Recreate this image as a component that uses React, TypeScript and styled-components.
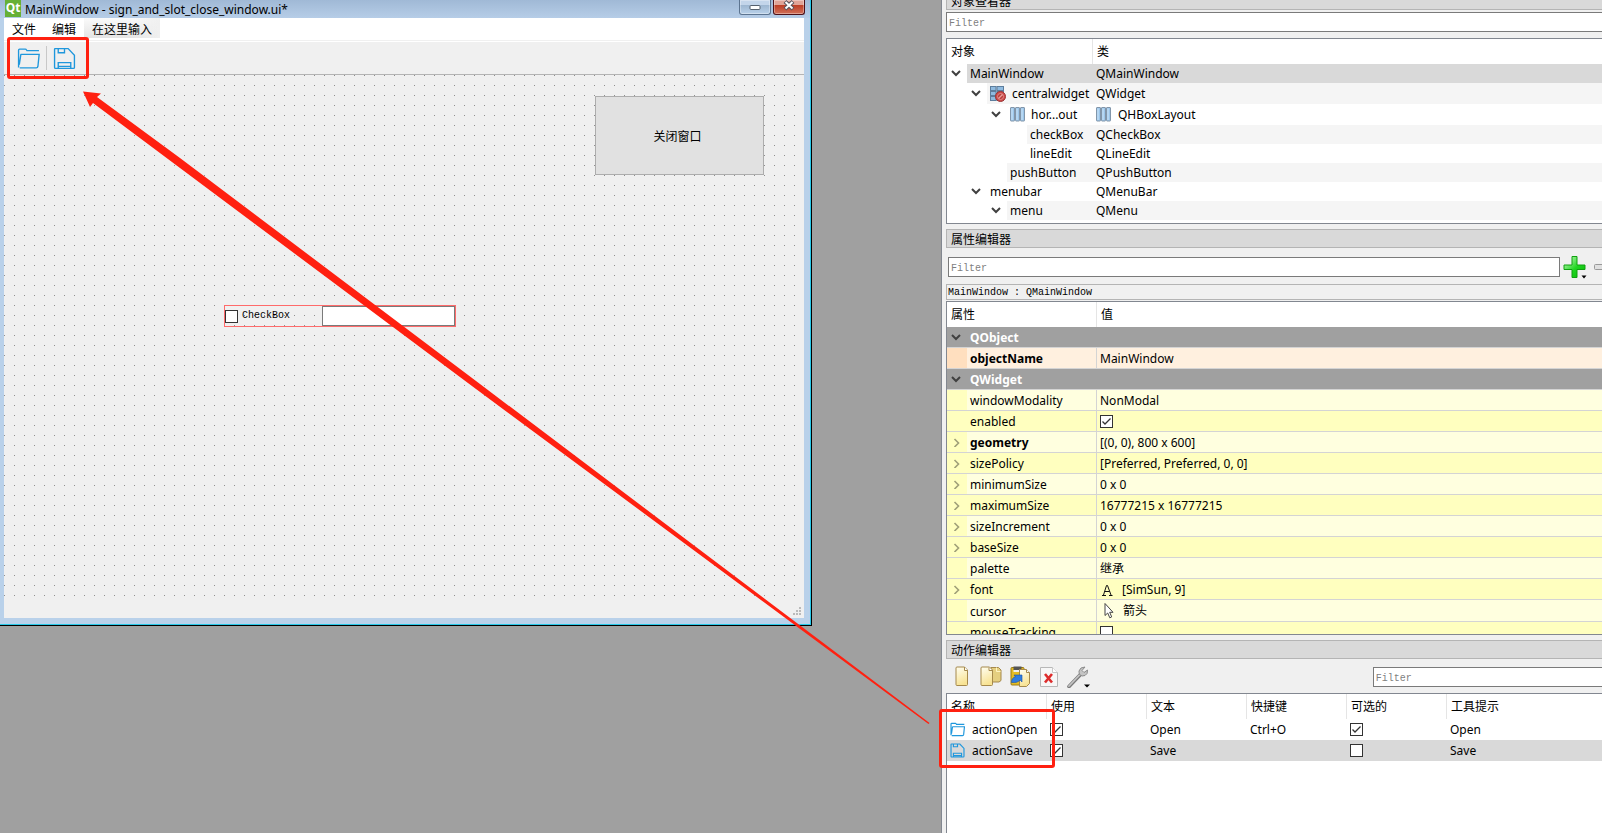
import React from "react";
import styled, { createGlobalStyle, css } from "styled-components";

const ui = `"Noto Sans", "Noto Sans CJK SC", sans-serif`;
const mono = `"Liberation Mono", "Noto Sans CJK SC", monospace`;
const red = "#ff2010";

const GlobalStyle = createGlobalStyle`
  * { box-sizing: border-box; }
  body { margin: 0; background: #a0a0a0; color: #000; font: 12px/16px ${ui}; }
  button, input { font: inherit; color: inherit; margin: 0; }
`;

const Page = styled.main`
  position: relative;
  display: grid;
  grid-template-columns: minmax(0, 942fr) minmax(0, 660fr);
  min-height: 100vh;
  overflow: hidden;
`;

const Workspace = styled.section`
  min-width: 0;
  background: #a0a0a0;
  border-right: 1px solid #828790;
`;

/* ---------- designed form window ---------- */

const FormWindow = styled.div`
  position: relative;
  width: 812px;
  background: #b9d1ea;
  border: solid #000;
  border-width: 0 1px 1px 0;
  box-shadow: inset -1px -1px 0 #28c8e8;
  padding-bottom: 7px;
`;

const TitleBar = styled.header`
  display: flex;
  align-items: flex-start;
  height: 18px;
  margin-right: 1px;
  padding: 0 5px;
  gap: 2px;
  background: linear-gradient(#a0b9d6, #b6cde7);
`;

const QtBadge = styled.span`
  width: 16px;
  height: 17px;
  margin-right: 2px;
  background: #66b036;
  color: #fff;
  font-weight: 700;
  line-height: 16px;
  text-align: center;
`;

const WindowTitle = styled.h1`
  flex: 1;
  margin: 0;
  font-size: 12px;
  font-weight: 400;
  line-height: 19px;
  white-space: nowrap;
`;

const CaptionButton = styled.button<{ $danger?: boolean }>`
  display: flex;
  justify-content: center;
  width: 32px;
  height: 15px;
  padding: 0;
  border: 1px solid ${(p) => (p.$danger ? "#4c1018" : "#5c7490")};
  border-top: 0;
  border-radius: 0 0 3px 3px;
  background: ${(p) =>
    p.$danger
      ? "linear-gradient(#e0a498 0 35%, #bd3d24 36%, #d0705a)"
      : "linear-gradient(#c3d5ea 0 35%, #9db6d0 36%, #b9d1ea)"};
  box-shadow: inset 0 0 0 1px rgba(255, 255, 255, 0.35);
`;

const FormBody = styled.div`
  width: 800px;
  margin-left: 4px;
  background: #f0f0f0;
`;

const MenuBar = styled.nav`
  display: flex;
  height: 24px;
  padding-bottom: 2px;
  background: linear-gradient(#fff 22px, #f0f0f0 22px 23px, #fff 23px);
`;

const MenuItem = styled.button<{ $placeholder?: boolean }>`
  height: 20px;
  padding: 0 8px;
  border: 0;
  line-height: 23px;
  background: ${(p) => (p.$placeholder ? "linear-gradient(90deg, #fff0, #fff0 60%, #f0f0f0), linear-gradient(#fafafa, #e4e4e4)" : "none")};
`;

const FormToolBar = styled.div`
  position: relative;
  z-index: 1;
  display: flex;
  align-items: center;
  height: 33px;
  padding-left: 13px;
  gap: 6px;
  border-bottom: 1px solid #b4b4b4;
`;

const ToolSeparator = styled.span`
  width: 1px;
  height: 24px;
  background: #c8c8c8;
`;

const PlainButton = styled.button`
  display: grid;
  place-items: center;
  padding: 0;
  border: 0;
  background: none;
`;

const DesignSurface = styled.div`
  position: relative;
  height: 521px;
  background: linear-gradient(90deg, #0000 1px, #f0f0f0 1px) 0 0 / 10px 10px,
    linear-gradient(#909090 1px, #f0f0f0 1px) 0 0 / 10px 10px;
`;

const CloseFormButton = styled.button`
  position: absolute;
  left: 591px;
  top: 21px;
  width: 169px;
  height: 79px;
  padding: 2px 4px 0 0;
  border: 1px solid #adadad;
  background: #e1e1e1;
`;

const BoxLayout = styled.div`
  position: absolute;
  left: 220px;
  top: 230px;
  display: flex;
  align-items: center;
  width: 232px;
  height: 22px;
  border: 1px solid #ff6b6b;
  font-family: ${mono};
  font-size: 10px;
`;

const FormCheck = styled.label`
  display: flex;
  flex: 1;
  align-items: center;
  gap: 4px;
  line-height: 12px;
`;

const FormLineEdit = styled.input`
  width: 133px;
  height: 20px;
  border: 1px solid #7a7a7a;
  background: #fff;
`;

const StatusBar = styled.footer`
  display: flex;
  justify-content: flex-end;
  align-items: flex-end;
  height: 22px;
  padding: 2px;
`;

/* ---------- shared controls ---------- */

const Tick = styled.input.attrs({ type: "checkbox" })`
  appearance: none;
  display: block;
  flex: none;
  width: 13px;
  height: 13px;
  border: 1px solid #333;
  background: #fff;
  &:checked {
    background: #fff
      url("data:image/svg+xml,%3Csvg xmlns='http://www.w3.org/2000/svg' viewBox='0 0 11 11'%3E%3Cpath d='M1.5 5.5 4 8 9.5 2.5' fill='none' stroke='%23333' stroke-width='1.3'/%3E%3C/svg%3E");
  }
`;

const Filter = styled.input.attrs({ type: "text", placeholder: "Filter" })<{ $open?: boolean }>`
  flex: 1;
  min-width: 0;
  height: 20px;
  padding: 2px 2px 0;
  border: 1px solid #7a7a7a;
  ${(p) => p.$open && "border-right: 0;"}
  background: #fff;
  font-family: ${mono};
  font-size: 10px;
  &::placeholder {
    color: #7f7f7f;
    opacity: 1;
  }
`;

/* ---------- dock area ---------- */

const Dock = styled.aside`
  display: flex;
  flex-direction: column;
  min-width: 0;
  padding-left: 4px;
  background: #f0f0f0;
`;

const DockPanel = styled.section<{ $grow?: boolean }>`
  display: flex;
  flex-direction: column;
  flex: ${(p) => (p.$grow ? "1" : "none")};
  margin-bottom: ${(p) => (p.$grow ? "0" : "5px")};
`;

const DockTitle = styled.h2<{ $cut?: boolean }>`
  display: flex;
  align-items: flex-end;
  height: ${(p) => (p.$cut ? "10px" : "19px")};
  margin: 0;
  padding-left: 4px;
  border: 1px solid #b4b4b4;
  border-right: 0;
  border-top-width: ${(p) => (p.$cut ? "0" : "1px")};
  background: #d9d9d9;
  font-size: 12px;
  font-weight: 400;
  line-height: ${(p) => (p.$cut ? "14px" : "15px")};
  overflow: hidden;
`;

const FilterRow = styled.div<{ $variant: "tree" | "property" | "action" }>`
  display: flex;
  align-items: center;
  height: 20px;
  ${(p) =>
    p.$variant === "tree"
      ? css`
          margin: 2px 0 6px;
        `
      : p.$variant === "property"
      ? css`
          margin: 9px 0 7px 2px;
        `
      : css`
          margin: 8px 0 6px 1px;
        `}
`;

const ActionFilterSlot = styled.div`
  display: flex;
  width: 35%;
  margin-left: auto;
`;

const PropertyTools = styled.div`
  display: flex;
  flex: none;
  width: 42px;
  gap: 7px;
  padding-left: 3px;
  overflow: hidden;
`;

const ObjectLabel = styled.div`
  height: 16px;
  margin-bottom: 1px;
  padding-left: 1px;
  border: 1px solid #b4b4b4;
  border-right: 0;
  font-family: ${mono};
  font-size: 10px;
  line-height: 16px;
`;

const View = styled.div<{ $height?: number }>`
  flex: ${(p) => (p.$height ? "none" : "1")};
  height: ${(p) => (p.$height ? `${p.$height}px` : "auto")};
  border: 1px solid #828790;
  border-right: 0;
  ${(p) => !p.$height && "border-bottom: 0;"}
  background: #fff;
  overflow: hidden;
`;

const Table = styled.table`
  width: 100%;
  border-collapse: separate;
  border-spacing: 0;
  table-layout: fixed;
  td, th {
    padding: 0;
    text-align: left;
    white-space: nowrap;
  }
`;

const Col = styled.col<{ $w?: number }>`
  width: ${(p) => (p.$w ? `${p.$w}px` : "auto")};
`;

const Head = styled.th`
  && {
    height: 25px;
    padding: 1px 0 0 4px;
    font-weight: 400;
  }
  & + & {
    border-left: 1px solid #e5e5e5;
  }
`;

type Shade = "none" | "alt" | "selected";
const shades: Record<Shade, string> = { none: "#fff", alt: "#f5f5f5", selected: "#d9d9d9" };

const TreeRow = styled.tr<{ $tall?: boolean }>`
  height: ${(p) => (p.$tall ? 21 : 19)}px;
`;

const Branch = styled.div<{ $depth: number }>`
  display: flex;
  height: 100%;
  padding-left: ${(p) => p.$depth * 20}px;
`;

const Expander = styled.span`
  display: grid;
  place-items: center;
  flex: none;
  width: 20px;
  padding: 0 2px 2px 0;
`;

const Name = styled.span<{ $shade: Shade; $tall?: boolean }>`
  display: flex;
  flex: 1;
  align-items: center;
  gap: 6px;
  min-width: 0;
  height: ${(p) => (p.$tall ? 21 : 19)}px;
  padding-left: 3px;
  background: ${(p) => shades[p.$shade]};
`;

const ClassCell = styled.td<{ $shade: Shade }>`
  background: ${(p) => shades[p.$shade]};
`;

const Inline = styled.span<{ $pad: number }>`
  display: flex;
  align-items: center;
  gap: 7px;
  padding-left: ${(p) => p.$pad}px;
`;

type Tone = "group" | "peach" | "light" | "deep";
const tones: Record<Tone, [string, string]> = {
  group: ["#a0a0a0", "#a0a0a0"],
  peach: ["#ffdfbf", "#fff0df"],
  light: ["#ffffbf", "#ffffdf"],
  deep: ["#ffffbf", "#ffffbf"],
};

const PropRow = styled.tr<{ $tone: Tone; $bold?: boolean; $tall?: boolean }>`
  background: ${(p) => tones[p.$tone][1]};
  color: ${(p) => (p.$tone === "group" ? "#fff" : "#000")};
  font-weight: ${(p) => (p.$bold || p.$tone === "group" ? 700 : 400)};
  line-height: 18px;
  td {
    height: ${(p) => (p.$tall ? 22 : 21)}px;
    border-bottom: 1px solid #d4d4d4;
  }
  td + td {
    padding-top: 1px;
    border-left: 1px solid #d4d4d4;
    font-weight: 400;
  }
`;

const PropName = styled.div<{ $tone: Tone; $tall?: boolean }>`
  display: flex;
  height: ${(p) => (p.$tall ? 21 : 20)}px;
  gap: 3px;
  padding-top: 2px;
  align-items: center;
  background: linear-gradient(90deg, ${(p) => tones[p.$tone][0]} 20px, #0000 20px);
`;

const ActionRow = styled.tr<{ $selected?: boolean }>`
  height: 21px;
  background: ${(p) => (p.$selected ? "#d9d9d9" : "#fff")};
`;

const ActionTools = styled.div`
  display: flex;
`;

const ToolButton = styled(PlainButton)`
  width: 29px;
  height: 22px;
`;

/* ---------- annotations ---------- */

const Highlight = styled.div<{ $x: number; $y: number; $w: number; $h: number }>`
  position: absolute;
  left: ${(p) => p.$x}px;
  top: ${(p) => p.$y}px;
  width: ${(p) => p.$w}px;
  height: ${(p) => p.$h}px;
  border: 3px solid ${red};
  border-radius: 3px;
  pointer-events: none;
`;

const Arrow = styled.svg`
  position: absolute;
  z-index: 2;
  left: 0;
  top: 0;
  pointer-events: none;
`;

const ActionArea = styled.div`
  position: relative;
  display: flex;
  flex: 1;
`;

/* ---------- icons ---------- */

const FolderIcon = ({ size = 22 }: { size?: number }) => (
  <svg width={size} height={size} viewBox="0 0 22 22" fill="none" stroke="#1f97dc" strokeWidth={size > 16 ? 1.3 : 1.7}>
    <path d="M1.5 19.5V3q0-1 1-1H8q.7 0 1 .6l.5.9H21M3.5 7H21.2L20 18.6Q19.8 20 18.4 20H2.6M3.7 7 2.2 17" />
  </svg>
);

const SaveIcon = ({ size = 22 }: { size?: number }) => (
  <svg width={size} height={size} viewBox="0 0 22 22" fill="none" stroke="#1f97dc" strokeWidth={size > 16 ? 1.3 : 1.7}>
    <path d="M2 1.5H14.5L20.5 8V19.5q0 1-1 1H2.500q-1 0-1-1V2q0-.5.5-.5ZM5 1.5V5.500h6V1.500M5 20.500V15h12v5.500M5 18.500H17" />
  </svg>
);

const Chevron = ({ open, dim }: { open?: boolean; dim?: boolean }) => (
  <svg width="10" height="10" viewBox="0 0 10 10" fill="none" stroke={dim ? "#a0a078" : "#404040"} strokeWidth={dim ? 1.6 : 2}>
    <path d={open ? "M1 3 5 7 9 3" : "M3.500 2 7.500 6 3.500 10"} />
  </svg>
);

const LayoutIcon = () => (
  <svg width="15" height="15" viewBox="0 0 15 15">
    {[0.5, 5.5, 10.5].map((x) => (
      <g key={x}>
        <rect x={x} y="0.5" width="4" height="13.500" rx="0.500" fill="#9cc6ea" stroke="#8296aa" />
        <path d={`M${x + 1.5} 1.500V13`} stroke="#cfe7fa" />
      </g>
    ))}
  </svg>
);

const BrokenLayoutIcon = () => (
  <svg width="16" height="16" viewBox="0 0 16 16">
    {[0.5, 5.5, 10.5].map((y) => (
      <g key={y} fill="#8fbbe0" stroke="#5d7d9c">
        <rect x="0.5" y={y} width="5.500" height="4" />
        <rect x="7" y={y} width="6.500" height="4" />
      </g>
    ))}
    <circle cx="10.500" cy="10.500" r="5" fill="#cf4a48" stroke="#9c3434" />
    <circle cx="10.500" cy="10.500" r="3" fill="#b93c3a" stroke="#e08a86" />
    <path d="M8.500 12.500 12.500 8.500" stroke="#e9a09c" strokeWidth="1.300" />
  </svg>
);

const PlusIcon = () => (
  <svg width="24" height="24" viewBox="0 0 24 24">
    <defs>
      <linearGradient id="plus" x1="0" y1="0" x2="1" y2="1">
        <stop offset="0" stopColor="#d8ffd0" />
        <stop offset="0.550" stopColor="#1fd51f" />
        <stop offset="1" stopColor="#08b808" />
      </linearGradient>
    </defs>
    <path d="M9 1.500h5v8.500h8v4.500h-8v8h-5v-8h-8v-4.500h8Z" fill="url(#plus)" stroke="#10a010" strokeLinejoin="round" />
    <path d="M18.500 20.500h5l-2.500 3Z" fill="#000" />
  </svg>
);

const MinusIcon = () => (
  <svg width="20" height="24" viewBox="0 0 20 24">
    <rect x="0.5" y="9.500" width="19" height="5" rx="1" fill="#e0e0e0" stroke="#999" />
  </svg>
);

const PageShape = ({ x, y = 1 }: { x: number; y?: number }) => (
  <path
    d={`M${x + 1} ${y}h7.500l3 3v14.500q0 1-1 1h-9.500q-1 0-1-1v-16.500q0-1 1-1Z`}
    fill="url(#paper)"
    stroke="#a5894c"
  />
);

const PaperGradient = () => (
  <linearGradient id="paper" x1="0" y1="0" x2="0.300" y2="1">
    <stop offset="0" stopColor="#fffef2" />
    <stop offset="1" stopColor="#f8e394" />
  </linearGradient>
);

const NewIcon = () => (
  <svg width="22" height="22" viewBox="0 0 22 22">
    <defs>
      <PaperGradient />
    </defs>
    <PageShape x={5} />
    <path d="M13.500 1v3.500H16.500" fill="#fff" stroke="#a5894c" />
  </svg>
);

const CopyIcon = () => (
  <svg width="22" height="22" viewBox="0 0 22 22">
    <path d="M11 1.500h7.500l2.500 2.500v10.500l-2 1.500h-8Z" fill="#e5cf80" stroke="#a5894c" />
    <path d="M16.500 1.500V5.500h4" fill="none" stroke="#fff4c0" />
    <PageShape x={1} />
    <path d="M9 1.500v3h3" fill="#fff" stroke="#a5894c" />
  </svg>
);

const PasteIcon = () => (
  <svg width="22" height="22" viewBox="0 0 22 22">
    <rect x="2" y="1.500" width="13" height="17.500" rx="1" fill="#e5bd22" stroke="#9a7a18" />
    <rect x="4.500" y="0.500" width="8" height="3.500" fill="#555" />
    <rect x="4.500" y="4" width="8" height="2" fill="#eee" />
    <path d="M10.500 3.500h7l3 3v11l-3 3H10.500Z" fill="url(#paper)" stroke="#a5894c" />
    <path d="M17.500 3.500v3h3" fill="#fff" stroke="#a5894c" />
    <path d="M2.500 16.500q0-5 4-5.500l-1.500-2h8v7l-2-2q-2 3-8.500 2.500Z" fill="#2f7de0" stroke="#1950a8" strokeWidth="0.600" />
  </svg>
);

const DeleteIcon = () => (
  <svg width="22" height="22" viewBox="0 0 22 22">
    <path d="M2.500 1.500h12l5 5v14h-17Z" fill="#f7f7f7" stroke="#b8b8b8" />
    <path d="M14.500 1.500v5h5" fill="#fff" stroke="#c8c8c8" />
    <path d="M7 8 14 16.500M14 8 7 16.500" stroke="#dd2c2c" strokeWidth="2.600" />
  </svg>
);

const WrenchIcon = () => (
  <svg width="24" height="22" viewBox="0 0 24 22">
    <path d="M3 20.500 14.500 8.500" stroke="#7a7a7a" strokeWidth="3.600" strokeLinecap="round" />
    <path d="M3 20 14.500 8" stroke="#c4c4c4" strokeWidth="1.800" strokeLinecap="round" />
    <path d="M19 1q-5 0-6 4 0 2 .500 3.500Q16 11 19 9.500 22 8 21.500 4l-3.500 2.500-2-2Z" fill="#c4c4c4" stroke="#8c8c8c" />
    <path d="M18 18.500h6l-3 3Z" fill="#000" />
  </svg>
);

const FontIcon = () => (
  <svg width="15" height="14" viewBox="0 0 15 14" fill="none" stroke="#111">
    <path d="M2 12.500H6M9 12.500H12.500M3.500 12 6.500 2.500H7.500L11 12M4.800 8.500H9.500" />
  </svg>
);

const CursorIcon = () => (
  <svg width="16" height="16" viewBox="0 0 16 16">
    <path d="M5 0.500V12.500L7.700 10 9.800 14.800 11.700 13.900 9.700 9.300H13Z" fill="#fff" stroke="#444" />
  </svg>
);

const Grip = () => (
  <svg width="9" height="9" fill="#bababa">
    {[[6, 0], [3, 3], [6, 3], [0, 6], [3, 6], [6, 6]].map(([x, y]) => (
      <rect key={`${x}-${y}`} x={x} y={y} width="2" height="2" />
    ))}
  </svg>
);

/* ---------- data ---------- */

type TreeItem = { name: string; cls: string; depth: number; open?: boolean; shade: Shade; icon?: React.ReactNode; clsIcon?: React.ReactNode };
const objects: TreeItem[] = [
  { name: "MainWindow", cls: "QMainWindow", depth: 0, open: true, shade: "selected" },
  { name: "centralwidget", cls: "QWidget", depth: 1, open: true, shade: "alt", icon: <BrokenLayoutIcon /> },
  { name: "hor...out", cls: "QHBoxLayout", depth: 2, open: true, shade: "none", icon: <LayoutIcon />, clsIcon: <LayoutIcon /> },
  { name: "checkBox", cls: "QCheckBox", depth: 3, shade: "alt" },
  { name: "lineEdit", cls: "QLineEdit", depth: 3, shade: "none" },
  { name: "pushButton", cls: "QPushButton", depth: 2, shade: "alt" },
  { name: "menubar", cls: "QMenuBar", depth: 1, open: true, shade: "none" },
  { name: "menu", cls: "QMenu", depth: 2, open: true, shade: "alt" },
];

type Prop = { name: string; value?: React.ReactNode; tone: Tone; bold?: boolean; nested?: boolean; tall?: boolean; icon?: React.ReactNode };
const properties: Prop[] = [
  { name: "QObject", tone: "group" },
  { name: "objectName", value: "MainWindow", tone: "peach", bold: true },
  { name: "QWidget", tone: "group" },
  { name: "windowModality", value: "NonModal", tone: "light" },
  { name: "enabled", value: <Tick aria-label="enabled" defaultChecked />, tone: "deep" },
  { name: "geometry", value: "[(0, 0), 800 x 600]", tone: "light", bold: true, nested: true },
  { name: "sizePolicy", value: "[Preferred, Preferred, 0, 0]", tone: "deep", nested: true },
  { name: "minimumSize", value: "0 x 0", tone: "light", nested: true },
  { name: "maximumSize", value: "16777215 x 16777215", tone: "deep", nested: true },
  { name: "sizeIncrement", value: "0 x 0", tone: "light", nested: true },
  { name: "baseSize", value: "0 x 0", tone: "deep", nested: true },
  { name: "palette", value: "继承", tone: "light" },
  { name: "font", value: "[SimSun, 9]", tone: "deep", nested: true, icon: <FontIcon /> },
  { name: "cursor", value: "箭头", tone: "light", tall: true, icon: <CursorIcon /> },
  { name: "mouseTracking", value: <Tick aria-label="mouseTracking" />, tone: "deep" },
];

const actions = [
  { name: "actionOpen", text: "Open", shortcut: "Ctrl+O", checkable: true, icon: <FolderIcon size={15} /> },
  { name: "actionSave", text: "Save", shortcut: "", checkable: false, selected: true, icon: <SaveIcon size={15} /> },
];

const actionTools: [string, React.ReactNode][] = [
  ["New", <NewIcon />],
  ["Copy", <CopyIcon />],
  ["Paste", <PasteIcon />],
  ["Delete", <DeleteIcon />],
  ["Configure", <WrenchIcon />],
];

/* ---------- sections ---------- */

const Form = () => (
  <FormWindow>
    <TitleBar>
      <QtBadge>Qt</QtBadge>
      <WindowTitle>MainWindow - sign_and_slot_close_window.ui*</WindowTitle>
      <CaptionButton aria-label="Minimize">
        <svg width="12" height="12">
          <rect x="1" y="5.500" width="10" height="4" rx="1" fill="#fff" stroke="#55606e" />
        </svg>
      </CaptionButton>
      <CaptionButton aria-label="Close" $danger>
        <svg width="12" height="12" viewBox="0 0 12 12">
          <path d="M2 1.500 10 9M10 1.500 2 9" stroke="#56545e" strokeWidth="4" />
          <path d="M2.500 2 9.500 8.500M9.500 2 2.500 8.500" stroke="#fff" strokeWidth="2" />
        </svg>
      </CaptionButton>
    </TitleBar>
    <FormBody>
      <MenuBar>
        <MenuItem>文件</MenuItem>
        <MenuItem>编辑</MenuItem>
        <MenuItem $placeholder>在这里输入</MenuItem>
      </MenuBar>
      <FormToolBar>
        <PlainButton aria-label="Open">
          <FolderIcon size={23} />
        </PlainButton>
        <ToolSeparator />
        <PlainButton aria-label="Save">
          <SaveIcon size={23} />
        </PlainButton>
        <Highlight $x={3} $y={-5} $w={82} $h={42} />
      </FormToolBar>
      <DesignSurface>
        <CloseFormButton>关闭窗口</CloseFormButton>
        <BoxLayout>
          <FormCheck>
            <Tick />
            CheckBox
          </FormCheck>
          <FormLineEdit type="text" aria-label="lineEdit" />
        </BoxLayout>
      </DesignSurface>
      <StatusBar>
        <Grip />
      </StatusBar>
    </FormBody>
  </FormWindow>
);

const ObjectInspector = () => (
  <DockPanel>
    <DockTitle $cut>对象查看器</DockTitle>
    <FilterRow $variant="tree">
      <Filter $open aria-label="Filter objects" />
    </FilterRow>
    <View $height={186}>
      <Table>
        <colgroup>
          <Col $w={145} />
          <Col />
        </colgroup>
        <thead>
          <tr>
            <Head>对象</Head>
            <Head>类</Head>
          </tr>
        </thead>
        <tbody>
          {objects.map((o) => (
            <TreeRow key={o.name} $tall={!!o.icon}>
              <td>
                <Branch $depth={o.depth}>
                  <Expander>{o.open && <Chevron open />}</Expander>
                  <Name $shade={o.shade} $tall={!!o.icon}>
                    {o.icon}
                    {o.name}
                  </Name>
                </Branch>
              </td>
              <ClassCell $shade={o.shade}>
                <Inline $pad={4}>
                  {o.clsIcon}
                  {o.cls}
                </Inline>
              </ClassCell>
            </TreeRow>
          ))}
        </tbody>
      </Table>
    </View>
  </DockPanel>
);

const PropertyEditor = () => (
  <DockPanel>
    <DockTitle>属性编辑器</DockTitle>
    <FilterRow $variant="property">
      <Filter aria-label="Filter properties" />
      <PropertyTools>
        <PlainButton aria-label="Add property">
          <PlusIcon />
        </PlainButton>
        <PlainButton aria-label="Remove property">
          <MinusIcon />
        </PlainButton>
      </PropertyTools>
    </FilterRow>
    <ObjectLabel>MainWindow : QMainWindow</ObjectLabel>
    <View $height={334}>
      <Table>
        <colgroup>
          <Col $w={149} />
          <Col />
        </colgroup>
        <thead>
          <tr>
            <Head>属性</Head>
            <Head>值</Head>
          </tr>
        </thead>
        <tbody>
          {properties.map((p) => (
            <PropRow key={p.name} $tone={p.tone} $bold={p.bold} $tall={p.tall}>
              <td colSpan={p.tone === "group" ? 2 : 1}>
                <PropName $tone={p.tone} $tall={p.tall}>
                  <Expander>
                    {p.tone === "group" && <Chevron open />}
                    {p.nested && <Chevron dim />}
                  </Expander>
                  {p.name}
                </PropName>
              </td>
              {p.tone !== "group" && (
                <td>
                  <Inline $pad={3}>
                    {p.icon}
                    {p.value}
                  </Inline>
                </td>
              )}
            </PropRow>
          ))}
        </tbody>
      </Table>
    </View>
  </DockPanel>
);

const ActionEditor = () => (
  <DockPanel $grow>
    <DockTitle>动作编辑器</DockTitle>
    <FilterRow $variant="action">
      <ActionTools>
        {actionTools.map(([label, icon]) => (
          <ToolButton key={label} aria-label={label}>
            {icon}
          </ToolButton>
        ))}
      </ActionTools>
      <ActionFilterSlot>
        <Filter $open aria-label="Filter actions" />
      </ActionFilterSlot>
    </FilterRow>
    <ActionArea>
      <View>
        <Table>
          <colgroup>
            <Col $w={99} />
            <Col $w={100} />
            <Col $w={100} />
            <Col $w={100} />
            <Col $w={100} />
            <Col />
          </colgroup>
          <thead>
            <tr>
              {["名称", "使用", "文本", "快捷键", "可选的", "工具提示"].map((h) => (
                <Head key={h}>{h}</Head>
              ))}
            </tr>
          </thead>
          <tbody>
            {actions.map((a) => (
              <ActionRow key={a.name} $selected={a.selected}>
                <td>
                  <Inline $pad={3}>
                    {a.icon}
                    {a.name}
                  </Inline>
                </td>
                <td>
                  <Inline $pad={4}>
                    <Tick aria-label={`${a.name} used`} defaultChecked />
                  </Inline>
                </td>
                <td>
                  <Inline $pad={4}>{a.text}</Inline>
                </td>
                <td>
                  <Inline $pad={4}>{a.shortcut}</Inline>
                </td>
                <td>
                  <Inline $pad={4}>
                    <Tick aria-label={`${a.name} checkable`} defaultChecked={a.checkable} />
                  </Inline>
                </td>
                <td>
                  <Inline $pad={4}>{a.text}</Inline>
                </td>
              </ActionRow>
            ))}
          </tbody>
        </Table>
      </View>
      <Highlight $x={-7} $y={16} $w={116} $h={59} />
    </ActionArea>
  </DockPanel>
);

export default function App() {
  return (
    <Page>
      <GlobalStyle />
      <Workspace>
        <Form />
      </Workspace>
      <Dock>
        <ObjectInspector />
        <PropertyEditor />
        <ActionEditor />
      </Dock>
      <Arrow width="940" height="740" aria-hidden="true">
        <path d="M83 91.500 101 93.500 97 97 180 158 480 384 929.500 723 928.500 724 476 389 180 168 93 103 90 107Z" fill={red} />
      </Arrow>
    </Page>
  );
}
